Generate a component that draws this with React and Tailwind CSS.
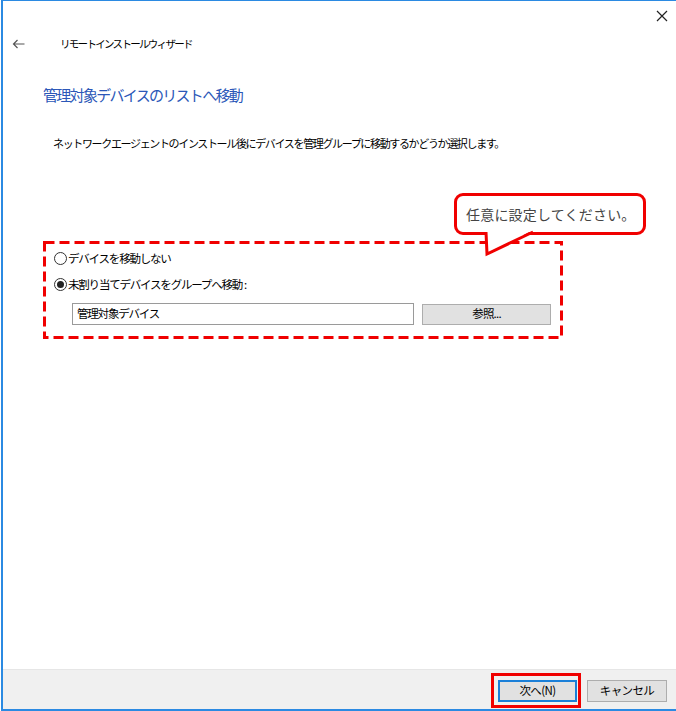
import React from 'react';

const font = { fontFamily: '"Noto Sans CJK JP", "Noto Sans", sans-serif' };

const Radio = ({ checked, label }) => (
  <div className="flex items-center h-[16px]">
    <span className="w-[13px] h-[13px] rounded-full border border-[#333] bg-white flex items-center justify-center">
      {checked && <span className="w-[7px] h-[7px] rounded-full bg-[#222]" />}
    </span>
    <span className="ml-[1px] text-[11.5px] leading-[16px] tracking-[-1.2px] text-black">{label}</span>
  </div>
);

const App = () => {
  return (
    <div className="w-[676px] h-[711px] bg-white pl-px overflow-hidden" style={font}>
      <div className="relative h-full flex flex-col border-l-2 border-t border-b-2 border-[#2b8ae2]">
        {/* close */}
        <div className="h-[29px] flex justify-end items-center pr-[8px]">
          <svg width="12" height="12" viewBox="0 0 12 12" className="mt-[1px]">
            <path d="M1 1 L11 11 M11 1 L1 11" stroke="#222" strokeWidth="1.2" />
          </svg>
        </div>

        {/* title row */}
        <div className="h-[28px] flex items-center pl-[9px]">
          <svg width="13" height="10" viewBox="0 0 13 10">
            <path d="M12.5 5 H1.5 M5.5 1 L1.5 5 L5.5 9" stroke="#555" strokeWidth="1.2" fill="none" />
          </svg>
          <span className="ml-[35px] text-[10.5px] tracking-[-1.7px] text-black">リモートインストールウィザード</span>
        </div>

        {/* heading */}
        <div className="mt-[27px] pl-[40px] text-[15px] leading-[20px] tracking-[-1.7px] text-[#2b57b8]">
          管理対象デバイスのリストへ移動
        </div>

        {/* description */}
        <div className="mt-[30px] pl-[50px] text-[11px] leading-[16px] tracking-[-1.35px] text-black">
          ネットワークエージェントのインストール後にデバイスを管理グループに移動するかどうか選択します。
        </div>

        {/* options box */}
        <div className="relative mt-[90px] ml-[40px] w-[520px] h-[98px] p-[3px]">
          <svg className="absolute inset-0" width="520" height="98" viewBox="0 0 520 98">
            <rect x="1.5" y="1.5" width="517" height="95" fill="none" stroke="#f00000" strokeWidth="3" strokeDasharray="10 5" />
          </svg>
          <div className="relative pt-[6px] pl-[8px]">
            <Radio label="デバイスを移動しない" />
            <div className="mt-[10px]">
              <Radio checked label={<>未割り当てデバイスをグループへ移動<span className="ml-[2px]">:</span></>} />
            </div>
            <div className="mt-[11px] ml-[18px] flex items-center gap-[8px]">
              <div className="w-[342px] h-[22px] border border-[#9a9a9a] bg-white flex items-center pl-[4px] text-[11.5px] tracking-[-1.2px] text-black">
                管理対象デバイス
              </div>
              <div className="w-[129px] h-[21px] border border-[#adadad] bg-[#e1e1e1] flex items-center justify-center text-[11.5px] tracking-[-0.8px] text-black">
                参照...
              </div>
            </div>
          </div>
        </div>

        <div className="flex-1" />

        {/* footer */}
        <div className="h-[40px] bg-[#f0f0f0] border-t border-[#e6e6e6] flex justify-end items-start pt-[10px] pr-[9px] gap-[10px]">
          <div className="relative">
            <div className="w-[79px] h-[22px] border-2 border-[#1a7fd8] bg-[#e1e1e1] flex items-center justify-center text-[11.5px] tracking-[-0.6px] text-black">
              次へ(N)
            </div>
            <div className="absolute left-[-7px] right-[-4px] top-[-7px] bottom-[-6px] border-[3px] border-[#f00000]" />
          </div>
          <div className="w-[80px] h-[22px] border border-[#adadad] bg-[#e1e1e1] flex items-center justify-center text-[11.5px] tracking-[-0.6px] text-black">
            キャンセル
          </div>
        </div>

        {/* callout annotation */}
        <div className="absolute left-[451px] top-[192px] w-[192px] h-[42px] border-[3px] border-[#f00000] rounded-[9px] bg-white flex items-center pl-[9px] text-[14px] tracking-[0.2px] text-[#444]">
          任意に設定してください。
        </div>
        <svg className="absolute left-[481px] top-[229px]" width="52" height="28" viewBox="0 0 52 28">
          <polygon points="2,0 3,24 49,0" fill="#fff" />
          <polyline points="2,2 3,24 49,2" fill="none" stroke="#f00000" strokeWidth="3" strokeLinejoin="miter" />
        </svg>
      </div>
    </div>
  );
};

export default App;
